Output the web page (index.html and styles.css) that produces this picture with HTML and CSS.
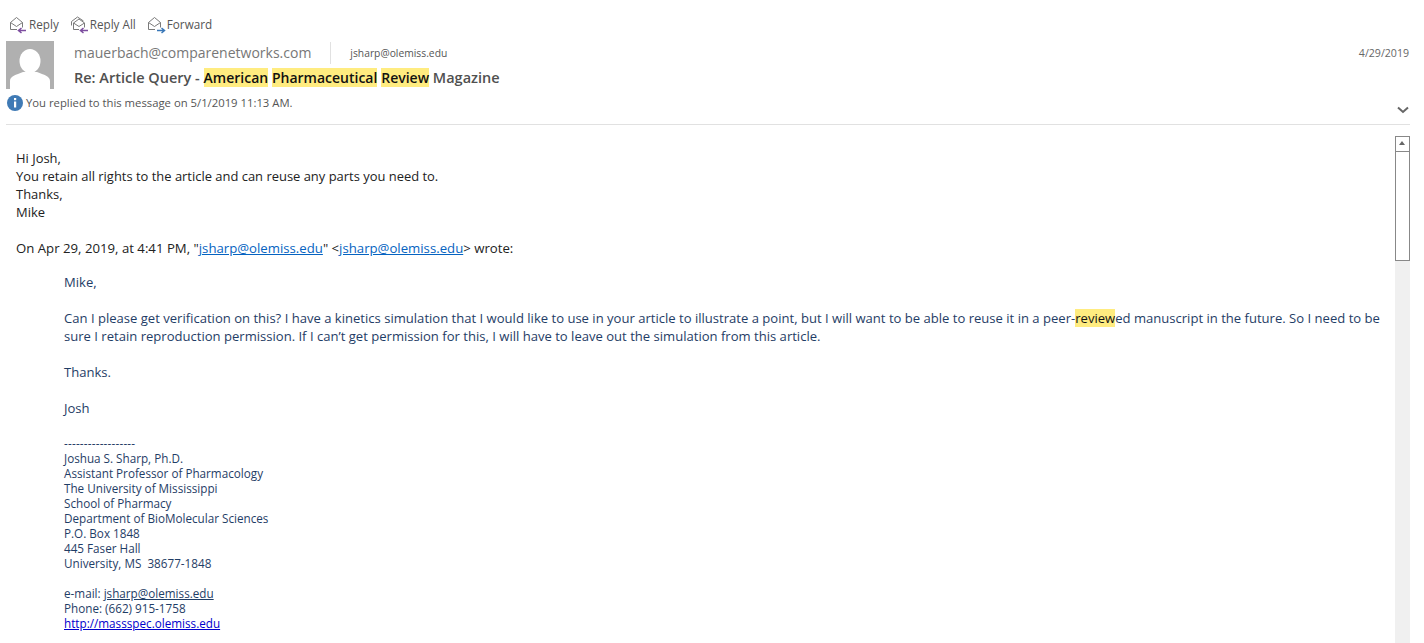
FILE: index.html
```html
<!DOCTYPE html>
<html>
<head>
    <title>Re: Article Query - American Pharmaceutical Review Magazine</title>
    <link rel="stylesheet" href="styles.css">
</head>
<body>
    <div class="toolbar">
        <button class="accion">
            <svg class="icono" width="20" height="18" viewBox="0 0 20 18" fill="none">
                <path d="M1.500 6.500 7.500 1.500l6 5v5M1.500 6.500v7H8M1.500 6.500l6 4 6-4" stroke="#7a7a7a"/>
                <path d="M17 14.500h-7M12.500 12l-3 2.500 3 2.500" stroke="#7d4e9f" stroke-width="1.500"/>
            </svg>
            Reply
        </button>
        <button class="accion">
            <svg class="icono" width="20" height="18" viewBox="0 0 20 18" fill="none">
                <path d="M1.500 9.500V5.500l6-4.500 6 4M3.500 7 9 3l5.500 4v4.500M3.500 7v6.500H9M3.500 7 9 10.500 14.500 7" stroke="#7a7a7a"/>
                <path d="M18 14.500h-7M13.500 12l-3 2.500 3 2.500" stroke="#7d4e9f" stroke-width="1.500"/>
            </svg>
            Reply All
        </button>
        <button class="accion">
            <svg class="icono" width="20" height="18" viewBox="0 0 20 18" fill="none">
                <path d="M1.500 6.500 7.500 1.500l6 5v5M1.500 6.500v7H8M1.500 6.500l6 4 6-4" stroke="#7a7a7a"/>
                <path d="M10 14.500h7M14.500 12l3 2.500-3 2.500" stroke="#3a78b8" stroke-width="1.500"/>
            </svg>
            Forward
        </button>
    </div>

    <div class="cabecera">
        <svg class="avatar" width="48" height="48" viewBox="0 0 48 48">
            <rect width="48" height="48" fill="#b0b0b0"/>
            <ellipse cx="24" cy="20" rx="10.500" ry="12" fill="#fff"/>
            <path d="M4 48v-8c0-5 6-6 13-9h14c7 3 13 4 13 9v8z" fill="#fff"/>
        </svg>
        <div class="datos">
            <div class="remitente">
                <span class="de">mauerbach@comparenetworks.com</span>
                <span class="para">jsharp@olemiss.edu</span>
                <span class="fecha">4/29/2019</span>
            </div>
            <div class="asunto">Re: Article Query - <mark>American</mark> <mark>Pharmaceutical</mark> <mark>Review</mark> Magazine</div>
        </div>
    </div>

    <div class="aviso">
        <svg width="16" height="16" viewBox="0 0 16 16">
            <circle cx="8" cy="8" r="8" fill="#3f7ab5"/>
            <rect x="7" y="6.500" width="2.200" height="6" fill="#fff"/>
            <rect x="7" y="3" width="2.200" height="2.200" fill="#fff"/>
        </svg>
        <span class="aviso-texto">You replied to this message on 5/1/2019 11:13 AM.</span>
        <svg class="expandir" width="12" height="8" viewBox="0 0 12 8" fill="none">
            <path d="M1 1.500 6 6l5-4.500" stroke="#666" stroke-width="2"/>
        </svg>
    </div>

    <div class="contenido">
        <div class="mensaje">
            <p class="saludo">Hi Josh,<br>You retain all rights to the article and can reuse any parts you need to.<br>Thanks,<br>Mike</p>
            <p class="wrote">On Apr 29, 2019, at 4:41 PM, "<a href="#">jsharp@olemiss.edu</a>" &lt;<a href="#">jsharp@olemiss.edu</a>&gt; wrote:</p>
            <div class="cita">
                <p>Mike,</p>
                <p>Can I please get verification on this? I have a kinetics simulation that I would like to use in your article to illustrate a point, but I will want to be able to reuse it in a peer-<mark>review</mark>ed manuscript in the future. So I need to be sure I retain reproduction permission. If I can’t get permission for this, I will have to leave out the simulation from this article.</p>
                <p>Thanks.</p>
                <p>Josh</p>
                <div class="firma">
                    <p><span class="guiones">------------------</span><br>Joshua S. Sharp, Ph.D.<br>Assistant Professor of Pharmacology<br>The University of Mississippi<br>School of Pharmacy<br>Department of BioMolecular Sciences<br>P.O. Box 1848<br>445 Faser Hall<br>University, MS&nbsp; 38677-1848</p>
                    <p>e-mail: <a class="mail" href="#">jsharp@olemiss.edu</a><br>Phone: (662) 915-1758<br><a class="web" href="#">http://massspec.olemiss.edu</a></p>
                </div>
            </div>
        </div>
        <div class="scrollbar">
            <div class="flecha"></div>
            <div class="thumb"></div>
        </div>
    </div>
</body>
</html>
```

FILE: styles.css
```css
html, body {
    margin: 0;
    height: 643px;
    overflow: hidden;
    background: #fff;
}

body {
    font-family: "Open Sans", "Noto Sans", sans-serif;
    color: #444;
}

.toolbar {
    display: flex;
    gap: 11px;
    height: 40px;
    padding: 14px 0 0 9px;
    box-sizing: border-box;
}

.accion {
    display: flex;
    align-items: flex-start;
    padding: 0;
    border: 0;
    background: none;
    font: 11.700px/20px "Open Sans", sans-serif;
    color: #555;
}

.icono {
    margin-top: 2px;
}

.cabecera {
    display: flex;
    margin-left: 6px;
    height: 50px;
    margin-top: 1px;
}

.avatar {
    flex: none;
}

.datos {
    flex: 1;
    padding-left: 20px;
    padding-right: 15px;
}

.remitente {
    display: flex;
    align-items: center;
    height: 24px;
}

.de {
    font-size: 14px;
    color: #777;
    padding-right: 19px;
    border-right: 1px solid #e1e1e1;
    line-height: 22px;
}

.para {
    font-size: 10.300px;
    color: #555;
    margin-left: 19px;
}

.fecha {
    font-size: 10.600px;
    color: #666;
    margin-left: auto;
}

.asunto {
    font-size: 14.500px;
    font-weight: 600;
    line-height: 24px;
    margin-top: 1px;
    color: #505050;
}

.asunto mark {
    font-size: 14px;
    background: #ffec80;
    color: #111;
}

.aviso {
    display: flex;
    align-items: center;
    gap: 3px;
    height: 34px;
    margin: 0 14px 0 6px;
    padding: 0 0 10px 1px;
    box-sizing: border-box;
    border-bottom: 1px solid #e1e1e1;
}

.aviso-texto {
    font-size: 11.300px;
    color: #555;
}

.expandir {
    margin-left: auto;
    margin-top: 14px;
    margin-right: 1px;
}

.contenido {
    display: flex;
    padding: 11px 14px 0 16px;
}

.mensaje {
    flex: 1;
    padding-top: 13px;
    font-size: 13.070px;
    line-height: 18px;
    color: #222;
}

.mensaje p {
    margin: 0 0 18px;
}

.mensaje .saludo {
    font-size: 12.950px;
}

.mensaje .wrote {
    font-size: 13.200px;
}

.mensaje a {
    color: #0563c1;
}

.mensaje mark {
    background: #ffec80;
    color: #111;
}

.cita {
    padding-left: 48px;
    color: #1f3d66;
    margin-top: -2px;
}

.firma {
    font-size: 11.700px;
    line-height: 15px;
    padding-top: 1px;
}

.firma p {
    margin: 0 0 15px;
}

.guiones {
    letter-spacing: 0.200px;
}

.firma .mail {
    color: #1f3d66;
}

.firma .web {
    color: #0000cc;
}

.scrollbar {
    flex: none;
    width: 15px;
    height: 520px;
    background: #f0f0f0;
}

.flecha {
    box-sizing: border-box;
    height: 16px;
    border: 1px solid #888;
    position: relative;
    background: #fff;
}

.flecha::after {
    content: "";
    position: absolute;
    left: 3px;
    top: 4px;
    border: 3.500px solid transparent;
    border-top: 0;
    border-bottom: 4px solid #666;
}

.thumb {
    box-sizing: border-box;
    height: 109px;
    border: 1px solid #888;
    border-top: 0;
    background: #fff;
}
```
